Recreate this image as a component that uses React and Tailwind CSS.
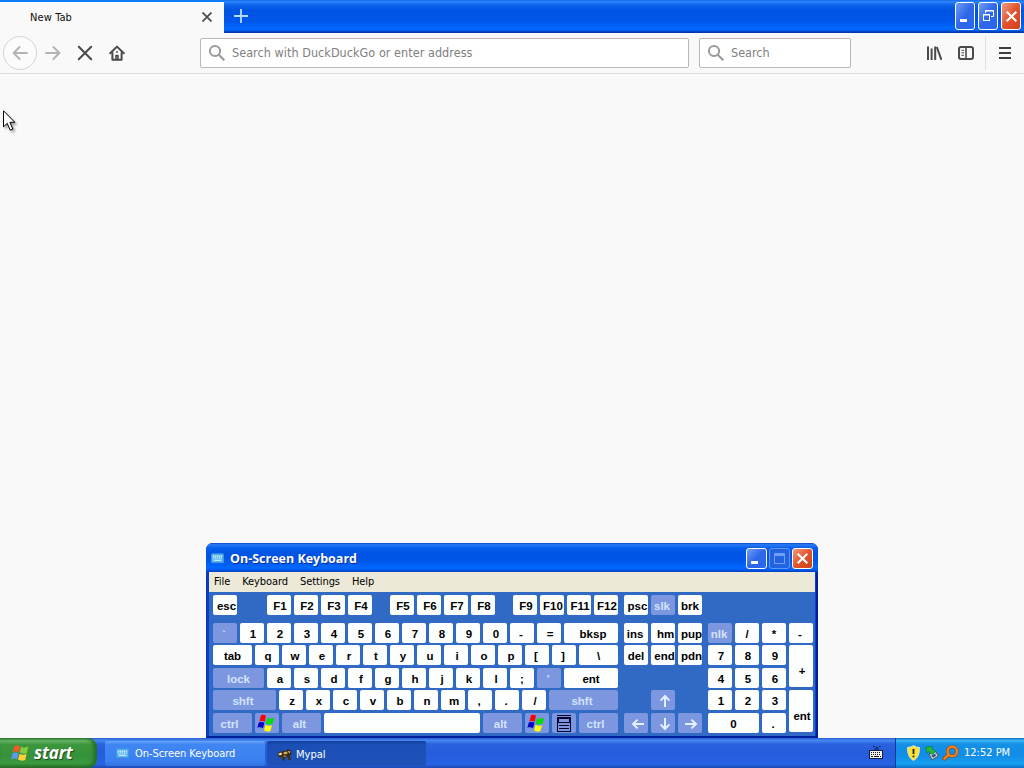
import React from "react";

const UI = "font-['DejaVu_Sans_Condensed','DejaVu_Sans',sans-serif]";

function WindowsFlag({ className }) {
  return (
    <svg viewBox="0 0 18 18" className={className}>
      <path d="M4 1.2 C6 0.2 7.5 0.8 9 1.8 L7.6 8 C6 7 4.5 6.8 2.4 7.6 Z" fill="#f00" />
      <path d="M10.2 4 C12 5.2 14 5 17.2 4 L15.6 9.8 C13 10.8 11 10.8 8.8 9.4 Z" fill="#0d0" />
      <path d="M1.8 8.4 C4 7.6 6 7.8 7.4 8.8 L6 14.2 C4.4 13.2 2.6 13 0.4 13.8 Z" fill="#00c" />
      <path d="M8.6 10.8 C10.6 12 12.4 12.2 15 11.2 L13.4 17 C11.2 18 9 17.6 7 16.2 Z" fill="#ff0" />
    </svg>
  );
}

function StartFlag() {
  return (
    <svg viewBox="0 0 18 18" className="h-[18px] w-[18px]">
      <path d="M3.2 2 C5.2 0.6 7.3 1 9 2.4 L7.8 8.4 C6 7.2 4.3 7.2 1.8 8.2 Z" fill="#ee5a28" />
      <path d="M10 2.8 C12 4.1 14 4 17.4 2.6 L15.8 9 C13.4 10 11 9.8 8.7 8.6 Z" fill="#86cc3c" />
      <path d="M1.6 9.2 C4 8.2 5.8 8.4 7.5 9.5 L6.1 15.4 C4.4 14.2 2.6 14.2 0.2 15.2 Z" fill="#5a98f2" />
      <path d="M8.5 9.8 C10.6 11 12.6 11 15.6 9.9 L14.2 16 C11.8 17 9.2 16.8 7 15.6 Z" fill="#fdd03a" />
    </svg>
  );
}

function KeyboardIcon({ className }) {
  return (
    <svg viewBox="0 0 14 11" className={className}>
      <rect x="0.5" y="0.5" width="13" height="9.5" rx="0.8" fill="#58b4ee" stroke="#3f98e0" />
      <path d="M2 3h10M2 5h10" stroke="#e4f6ff" strokeWidth="1.2" strokeDasharray="1.4 0.7" />
      <path d="M3 7.4h8" stroke="#e4f6ff" strokeWidth="1.2" />
    </svg>
  );
}

function SearchGlass() {
  return (
    <svg viewBox="0 0 18 18" className="h-[18px] w-[18px] shrink-0" fill="none" stroke="#9a9a9a">
      <circle cx="7" cy="7" r="5.1" strokeWidth="2" />
      <path d="M10.8 10.8 L16.3 16.3" strokeWidth="2.2" />
    </svg>
  );
}

function CaptionButton({ kind, tall, dim }) {
  const size = tall ? "h-7 w-5" : "h-[21px] w-[21px]";
  const paint =
    kind === "close"
      ? "border-white bg-gradient-to-br from-[#f09a80] via-[#e0532c] to-[#d0421a]"
      : dim
        ? "border-[#5f96ee] bg-gradient-to-br from-[#2560dc] to-[#1f64e6]"
        : "border-white bg-gradient-to-br from-[#6f9cf4] via-[#2f66e8] to-[#2868ee]";
  return (
    <div className={`flex items-center justify-center rounded-[3px] border ${size} ${paint}`}>
      {kind === "min" && (
        <svg viewBox="0 0 19 19" className="h-[19px] w-[19px] shrink-0">
          <rect x="4" y="12" width="7" height="3" fill="#fff" />
        </svg>
      )}
      {kind === "restore" && (
        <svg viewBox="0 0 18 18" className="h-[18px] w-[18px] shrink-0" fill="none" stroke="#fff">
          <path d="M6.5 6V3.5h8v6H12" />
          <path d="M6 4h9" />
          <rect x="4.5" y="7.5" width="6" height="6" />
          <path d="M4 8h7" />
        </svg>
      )}
      {kind === "max" && (
        <svg viewBox="0 0 19 19" className="h-[19px] w-[19px] shrink-0" fill="none" stroke="#6f9ff2">
          <rect x="4.5" y="4.5" width="10" height="10" />
          <path d="M4 6h11" strokeWidth="2" />
        </svg>
      )}
      {kind === "close" && (
        <svg viewBox="0 0 19 19" className="h-[19px] w-[19px] shrink-0" stroke="#fff" strokeWidth="2.1">
          <path d="M4.7 4.7 L14.3 14.3 M14.3 4.7 L4.7 14.3" />
        </svg>
      )}
    </div>
  );
}

function Key({ label, w = "w-6", h = "h-5", mod, pad = "pl-0.5", children }) {
  const tone = mod ? "bg-[#7c97e0] text-[#d3e3fb]" : "bg-[#fdfefe] text-black";
  const drop = label ? "pt-px" : "";
  return (
    <div
      className={`flex shrink-0 items-center justify-center rounded-[2px] whitespace-nowrap ${w} ${h} ${pad} ${drop} ${tone}`}
    >
      {children || label}
    </div>
  );
}

function Keys({ list }) {
  return list.map((k, i) => <Key key={i} label={k} />);
}

function Row({ className = "", children }) {
  return <div className={`flex gap-[3px] ${className}`}>{children}</div>;
}

function Arrow({ turn }) {
  return (
    <svg viewBox="0 0 14 14" className={`h-3.5 w-3.5 ${turn}`} fill="none" stroke="#e2f0ff" strokeWidth="2">
      <path d="M7 13V2.5" />
      <path d="M2.6 6.6 L7 2 L11.4 6.6" />
    </svg>
  );
}

function MainKeys() {
  return (
    <div className="flex w-[405px] flex-col">
      <div className="flex justify-between">
        <Key label="esc" pad="pl-[3px]" />
        <Row className="ml-3"><Keys list={["F1", "F2", "F3", "F4"]} /></Row>
        <Row><Keys list={["F5", "F6", "F7", "F8"]} /></Row>
        <Row><Keys list={["F9", "F10", "F11", "F12"]} /></Row>
      </div>
      <Row className="mt-2">
        <Key label="`" mod pad="pr-0.5" />
        <Keys list={["1", "2", "3", "4", "5", "6", "7", "8", "9", "0"]} />
        <Key label="-" pad="pr-0.5" />
        <Key label="=" />
        <Key label="bksp" w="w-[54px]" pad="pl-1" />
      </Row>
      <Row className="mt-0.5">
        <Key label="tab" w="w-[39px]" pad="" />
        <Keys list={["q", "w", "e", "r", "t", "y", "u", "i", "o", "p"]} />
        <Key label="[" pad="pr-0.5" />
        <Key label="]" pad="pr-0.5" />
        <Key label={"\\"} w="w-[39px]" pad="" />
      </Row>
      <Row className="mt-[3px]">
        <Key label="lock" w="w-[51px]" mod pad="" />
        <Keys list={["a", "s", "d", "f", "g", "h", "j", "k", "l"]} />
        <Key label=";" pad="" />
        <Key label="'" mod pad="pr-0.5" />
        <Key label="ent" w="w-[54px]" pad="" />
      </Row>
      <Row className="mt-0.5">
        <Key label="shft" w="w-[63px]" mod pad="pr-[3px]" />
        <Keys list={["z", "x", "c", "v", "b", "n", "m"]} />
        <Key label="," pad="pr-0.5" />
        <Key label="." pad="pr-0.5" />
        <Key label="/" />
        <Key label="shft" w="w-[69px]" mod pad="pr-[3px]" />
      </Row>
      <Row className="mt-[3px]">
        <Key label="ctrl" w="w-[39px]" mod pad="pr-1.5" />
        <Key mod pad="pr-0.5"><WindowsFlag className="h-[18px] w-[18px]" /></Key>
        <Key label="alt" w="w-[39px]" mod pad="pr-1" />
        <Key label=" " w="w-[156px]" />
        <Key label="alt" w="w-[39px]" mod pad="pr-1" />
        <Key mod pad="pr-0.5"><WindowsFlag className="h-[18px] w-[18px]" /></Key>
        <Key mod pad="">
          <svg viewBox="0 0 14 17" className="h-[17px] w-3.5" fill="none" stroke="#05052d">
            <path d="M0 0.5h14" />
            <rect x="0.5" y="2.5" width="13" height="14" />
            <rect x="1.5" y="3.5" width="11" height="4" />
            <path d="M2 10.5h10M2 13.5h10" />
          </svg>
        </Key>
        <Key label="ctrl" w="w-[39px]" mod pad="pr-1.5" />
      </Row>
    </div>
  );
}

function NavKeys() {
  return (
    <div className="flex w-[78px] flex-col">
      <Row><Key label="psc" pad="pl-[3px]" /><Key label="slk" mod pad="pr-0.5" /><Key label="brk" pad="" /></Row>
      <Row className="mt-2"><Key label="ins" pad="pr-0.5" /><Key label="hm" pad="pl-[5px]" /><Key label="pup" pad="pl-[3px]" /></Row>
      <Row className="mt-0.5"><Key label="del" pad="" /><Key label="end" pad="pl-[3px]" /><Key label="pdn" pad="pl-[3px]" /></Row>
      <Row className="mt-[25px] justify-center"><Key mod pad="pl-1 pt-px"><Arrow turn="" /></Key></Row>
      <Row className="mt-[3px]">
        <Key mod pad="pl-1 pt-0.5"><Arrow turn="-rotate-90" /></Key>
        <Key mod pad="pl-1 pt-0.5"><Arrow turn="rotate-180" /></Key>
        <Key mod pad="pl-0.5 pt-0.5"><Arrow turn="rotate-90" /></Key>
      </Row>
    </div>
  );
}

function NumPad() {
  return (
    <div className="flex w-[105px] flex-col pt-7">
      <Row><Key label="nlk" mod pad="pr-0.5" /><Key label="/" pad="" /><Key label="*" pad="" /><Key label="-" pad="pr-0.5" /></Row>
      <div className="mt-0.5 flex gap-[3px]">
        <div className="flex flex-col">
          <Row><Keys list={["7", "8", "9"]} /></Row>
          <Row className="mt-[3px]"><Keys list={["4", "5", "6"]} /></Row>
          <Row className="mt-0.5"><Keys list={["1", "2", "3"]} /></Row>
          <Row className="mt-[3px]"><Key label="0" w="w-[51px]" pad="" /><Key label="." pad="pr-0.5" /></Row>
        </div>
        <div className="flex flex-col gap-[3px]">
          <div className="flex h-[42px] w-6 items-center justify-center rounded-[2px] bg-[#fdfefe] pt-2.5 pl-0.5 text-black">+</div>
          <div className="flex h-[42px] w-6 items-center justify-center rounded-[2px] bg-[#fdfefe] pt-2.5 pl-0.5 text-black">ent</div>
        </div>
      </div>
    </div>
  );
}

function OnScreenKeyboard() {
  return (
    <div className="absolute top-[543px] left-[206px] flex h-[195px] w-[612px] flex-col overflow-hidden rounded-t-[7px] bg-[#0a3fc4] shadow-[inset_1px_0_0_#0a35b8,inset_-2px_-2px_0_#0020a0]">
      <div className="flex h-[29px] shrink-0 items-center bg-[linear-gradient(180deg,#0a45c0_0%,#2a7cf6_6%,#0a62ee_16%,#0054e3_35%,#0056e8_60%,#0068ff_85%,#0058ee_93%,#0040b8_100%)] pt-px pr-[5px] pl-[5px]">
        <KeyboardIcon className="h-[11px] w-[13px]" />
        <span className="ml-1.5 pt-0.5 font-['Open_Sans','Noto_Sans',sans-serif] text-[12.5px] font-bold whitespace-nowrap text-white [text-shadow:1px_1px_0_#0a2f9a]">
          On-Screen Keyboard
        </span>
        <div className="ml-auto flex gap-0.5 pt-px">
          <CaptionButton kind="min" />
          <CaptionButton kind="max" dim />
          <CaptionButton kind="close" />
        </div>
      </div>
      <div className={`mx-[3px] flex h-5 shrink-0 items-center gap-3 bg-[#ece9d8] pl-[5px] text-[11px] tracking-[-0.08px] text-black ${UI}`}>
        <span>File</span>
        <span>Keyboard</span>
        <span>Settings</span>
        <span>Help</span>
      </div>
      <div className="mx-[3px] flex h-36 shrink-0 gap-1.5 bg-[#316ac5] pt-[3px] pl-1 font-['Liberation_Sans',Arial,sans-serif] text-[11.5px] leading-[20px] font-bold">
        <MainKeys />
        <NavKeys />
        <NumPad />
      </div>
    </div>
  );
}

function TabStrip() {
  return (
    <div className="flex h-[33px] bg-[linear-gradient(180deg,#1464e8_0%,#2f86fb_5%,#0f66ee_14%,#0054e3_30%,#0056ea_65%,#0068ff_85%,#0062f8_92%,#003aa8_97%,#003aa8_100%)]">
      <div className="flex h-[33px] w-56 items-center border-t-2 border-[#0a7cf8] bg-[#f9f9fa] pr-3 pl-[30px]">
        <span className={`pt-px text-[11px] tracking-[0.1px] text-[#0c0c0d] ${UI}`}>New Tab</span>
        <svg viewBox="0 0 10 10" className="mb-0.5 ml-auto h-2.5 w-2.5" stroke="#4a4a4b" strokeWidth="1.7">
          <path d="M0.5 0.5 L9.5 9.5 M9.5 0.5 L0.5 9.5" />
        </svg>
      </div>
      <svg viewBox="0 0 14 14" className="mt-[9px] ml-2.5 h-3.5 w-3.5" stroke="#b4dcff" strokeWidth="1.8">
        <path d="M7 0v14M0 7h14" />
      </svg>
      <div className="mt-0.5 mr-[3px] ml-auto flex gap-[3px]">
        <CaptionButton kind="min" tall />
        <CaptionButton kind="restore" tall />
        <CaptionButton kind="close" tall />
      </div>
    </div>
  );
}

function Toolbar() {
  return (
    <div className="flex h-[41px] items-center border-b border-[#dcdcdc] bg-[#f9f9fa]">
      <div className="ml-[3px] flex h-[34px] w-[34px] items-center justify-center rounded-full border border-[#d4d4d4] bg-[#fbfbfb]">
        <svg viewBox="0 0 16 16" className="h-4 w-4" fill="none" stroke="#b4b4b4" strokeWidth="2" strokeLinecap="round" strokeLinejoin="round">
          <path d="M15 8H1.6M7.6 2 L1.6 8 L7.6 14" />
        </svg>
      </div>
      <svg viewBox="0 0 16 16" className="ml-2 h-4 w-4" fill="none" stroke="#b4b4b4" strokeWidth="2" strokeLinecap="round" strokeLinejoin="round">
        <path d="M1 8H14.4M8.4 2 L14.4 8 L8.4 14" />
      </svg>
      <svg viewBox="0 0 16 16" className="ml-4 h-4 w-4" stroke="#4a4a4b" strokeWidth="2" strokeLinecap="round">
        <path d="M1.8 1.8 L14.2 14.2 M14.2 1.8 L1.8 14.2" />
      </svg>
      <svg viewBox="0 0 16 16" className="ml-4 h-4 w-4" fill="none" stroke="#4a4a4b" strokeWidth="2" strokeLinecap="round" strokeLinejoin="round">
        <path d="M1.2 8.2 L8 1.6 L14.8 8.2" />
        <path d="M3.4 8V14.8H12.6V8" />
        <path d="M7 14.5V10.6H9V14.5" strokeWidth="1.6" />
        <path d="M8 6.8V7" strokeWidth="1.8" />
      </svg>
      <div className={`ml-[75px] flex h-[30px] w-[489px] items-center rounded-[2px] border border-[#b8b8b8] bg-white pl-[7px] text-[12.5px] text-[#808080] ${UI}`}>
        <SearchGlass />
        <span className="ml-1.5 pt-px tracking-[0.05px] whitespace-nowrap">Search with DuckDuckGo or enter address</span>
      </div>
      <div className={`ml-2.5 flex h-[30px] w-[152px] items-center rounded-[2px] border border-[#b8b8b8] bg-white pl-[7px] text-[12.5px] text-[#808080] ${UI}`}>
        <SearchGlass />
        <span className="ml-1.5 pt-px">Search</span>
      </div>
      <svg viewBox="0 0 16 16" className="ml-[75px] h-4 w-4" stroke="#4a4a4b" strokeWidth="2">
        <path d="M2 1.5V15M5.6 3.5V15M9.2 1.5V15" />
        <path d="M10.8 2 L15.4 14.8" />
      </svg>
      <svg viewBox="0 0 16 16" className="ml-4 h-4 w-4" fill="none" stroke="#4a4a4b" strokeWidth="2">
        <rect x="1" y="2" width="14" height="12" rx="2" />
        <path d="M8 2V14" strokeWidth="1.6" />
        <path d="M3.4 5.3H6M3.4 7.8H6M3.4 10.3H6" strokeWidth="1" />
      </svg>
      <div className="ml-[11px] h-[34px] w-px bg-[#e0e0e1]" />
      <svg viewBox="0 0 14 14" className="ml-3 h-3.5 w-3.5" stroke="#3e3e3f" strokeWidth="2">
        <path d="M1 2H13M1 7H13M1 12H13" />
      </svg>
    </div>
  );
}

function Taskbar() {
  return (
    <div className={`flex h-[30px] bg-[linear-gradient(180deg,#2a5fd0_0%,#4488f4_8%,#2a62de_20%,#245cdc_50%,#2663e4_88%,#1b48b0_100%)] text-[11px] text-white ${UI}`}>
      <div className="flex w-[97px] items-center rounded-r-[9px] bg-[linear-gradient(180deg,#2c7a2c_0%,#6db86a_8%,#3c963c_22%,#36923a_60%,#3a9a3e_85%,#256f28_100%)] pl-[11px] shadow-[inset_-3px_0_4px_#1f6a26]">
        <StartFlag />
        <span className="ml-[5px] font-['Open_Sans','Noto_Sans',sans-serif] text-[17px] font-bold tracking-[-0.1px] italic [text-shadow:1px_1px_1px_#1c4a1c]">start</span>
      </div>
      <div className="mt-[3px] ml-2 flex h-[25px] w-40 items-center rounded-[2px] bg-[linear-gradient(180deg,#6aa4fa_0%,#3f86f3_14%,#3a80f0_80%,#3270de_100%)] pl-[11px]">
        <KeyboardIcon className="h-[11px] w-[13px]" />
        <span className="ml-1.5 pt-px tracking-[-0.05px] whitespace-nowrap">On-Screen Keyboard</span>
      </div>
      <div className="mt-[3px] ml-0.5 flex h-[25px] w-[159px] items-center rounded-[2px] bg-[linear-gradient(180deg,#143c96_0%,#1c4fb6_14%,#1e52b8_100%)] pl-2.5">
        <svg viewBox="0 0 15 13" className="mt-0.5 h-[13px] w-[15px]">
          <path d="M0.5 5.5 L3 3.5 L6.5 3.2 L9 2.4 L11 1 L14 2.5 L14.5 6 L13 8 L14 12 H11.6 L10.6 9 L8 9.2 L7.6 12.4 H5.4 L5.6 9.4 L3 9.4 L0.8 8 Z" fill="#3a2c18" />
          <path d="M1 6 L4 4.6 L5.4 6 L3 7.4 Z" fill="#f1e2b4" />
          <path d="M6.4 4.6 L10 3.6 L10.6 5.4 L7 6.6 Z" fill="#e0b468" />
          <path d="M11 3 L13.2 3.4 L12.4 5.4 Z" fill="#f0d898" />
          <path d="M6 8 L9 7.2 L9.6 8.2 L7 9 Z" fill="#b8863c" />
        </svg>
        <span className="ml-1 pt-[3px]">Mypal</span>
      </div>
      <svg viewBox="0 0 14 13" className="mt-2 ml-auto h-[13px] w-3.5">
        <path d="M4 0.5h2M7 1.5h2M10 0.5h1.5M5 3h5" stroke="#0b1c50" />
        <rect x="0.5" y="4.5" width="13" height="8" fill="#f4f4ec" stroke="#111c48" />
        <path d="M2 6.5h10M2 8.5h10" stroke="#111" strokeDasharray="1 1" />
        <path d="M2 10.5h2M5 10.5h5M11 10.5h1" stroke="#111" />
      </svg>
      <div className="ml-3 flex w-[129px] items-center border-l border-[#0b3a96] bg-[linear-gradient(180deg,#0e6cc4_0%,#3bb4f6_8%,#1490e6_20%,#128de6_60%,#16a0f0_85%,#0d70c8_100%)] pl-[11px]">
        <svg viewBox="0 0 13 16" className="h-4 w-[13px]">
          <path d="M6.5 0.6 C8.5 2 10.5 2.4 12.4 2.4 C12.6 8.5 11 13 6.5 15.4 C2 13 0.4 8.5 0.6 2.4 C2.5 2.4 4.5 2 6.5 0.6 Z" fill="#fbe334" stroke="#e6e4cc" />
          <path d="M6.5 4V9M6.5 10.5V12.3" stroke="#222" strokeWidth="1.8" />
        </svg>
        <svg viewBox="0 0 14 15" className="ml-[5px] h-[15px] w-3.5">
          <path d="M4 8 L10.5 5 L13.5 10 L7 14 Z" fill="#bcc8d2" stroke="#3c5468" />
          <path d="M6.5 9.5 L10 7.8 L11 9.8 L8 11.5 Z" fill="#34566e" />
          <path d="M0.8 1 L7.4 0.4 L7 2.6 L10.4 5.8 L7.2 8.6 L4 5.4 L2.2 7 Z" fill="#27b83a" stroke="#0e7020" strokeWidth="0.6" />
        </svg>
        <svg viewBox="0 0 17 16" className="ml-[3px] h-4 w-[17px]" fill="none">
          <path d="M6.6 9.6 L2.4 13.6" stroke="#8b4a14" strokeWidth="4" strokeLinecap="round" />
          <circle cx="10.3" cy="6.4" r="4.7" stroke="#9a4c10" strokeWidth="3.4" />
          <circle cx="10.3" cy="6.4" r="4.7" stroke="#ee8424" strokeWidth="2.2" />
          <path d="M6.6 9.6 L2.4 13.6" stroke="#ee8424" strokeWidth="2.4" strokeLinecap="round" />
        </svg>
        <span className="ml-[5px] pt-px whitespace-nowrap">12:52 PM</span>
      </div>
    </div>
  );
}

export default function App() {
  return (
    <div className="relative flex h-[768px] w-[1024px] flex-col overflow-hidden bg-[#f9f9fa]">
      <TabStrip />
      <Toolbar />
      <div className="flex-1 bg-[#f9f9fa]" />
      <Taskbar />
      <OnScreenKeyboard />
      <svg viewBox="0 0 14 22" className="absolute top-[110px] left-[3px] h-[22px] w-3.5 [filter:drop-shadow(2px_2px_1px_rgba(0,0,0,0.35))]">
        <path d="M0.5 0.8 V16.8 L4.2 13.3 L7.2 20.2 L9.8 19 L6.9 12.3 H11.8 Z" fill="#fff" stroke="#000" />
      </svg>
    </div>
  );
}
